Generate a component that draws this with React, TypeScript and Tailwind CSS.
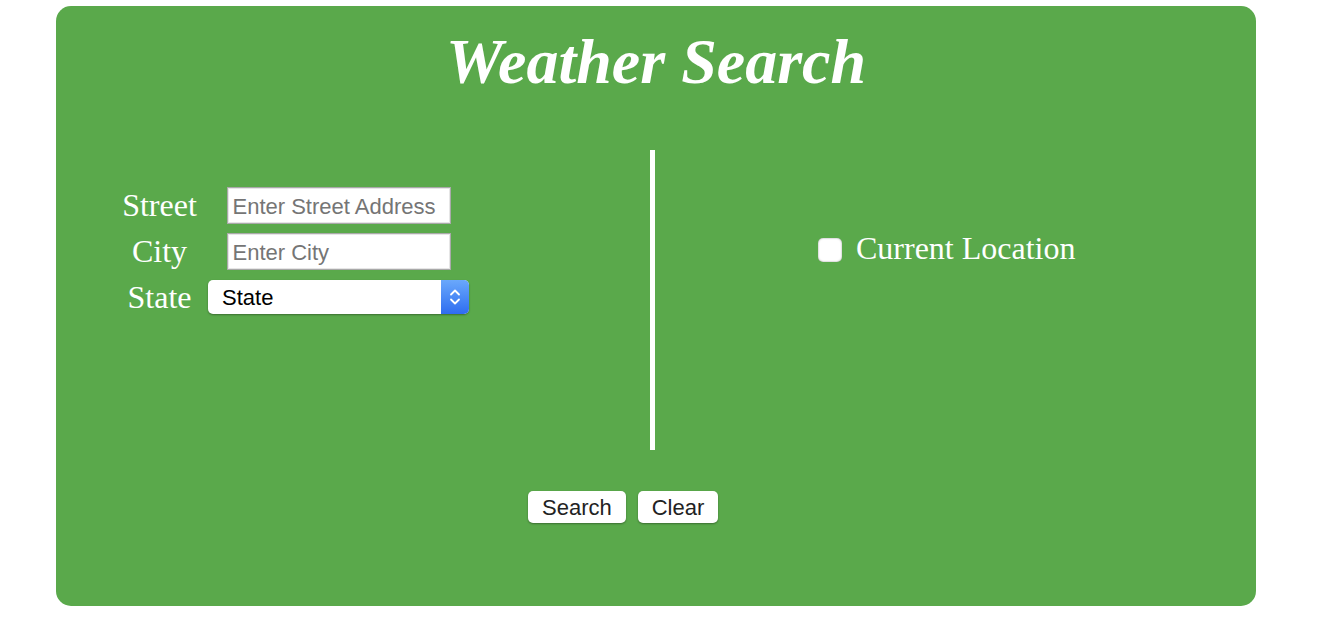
import { useState } from "react";

const serif = { fontFamily: '"Liberation Serif", "Times New Roman", serif' };
const sans = { fontFamily: '"Liberation Sans", Arial, sans-serif' };

export default function App() {
  const [street, setStreet] = useState("");
  const [city, setCity] = useState("");
  const [current, setCurrent] = useState(false);

  return (
    <div className="min-h-screen bg-white pt-[6px] pl-[56px]">
      <div className="w-[1200px] h-[600px] rounded-[15px] bg-[#5aa94b] text-white flex flex-col">
        {/* titulo */}
        <h1
          className="pt-[24px] text-center text-[64px] leading-[64px] font-bold italic"
          style={serif}
        >
          Weather Search
        </h1>

        <div className="mt-[56px] flex h-[300px]">
          {/* formulario */}
          <div className="w-[594px] pl-[55px] pt-[32px]">
            <div className="grid grid-cols-[97px_261px] auto-rows-[46px] items-center">
              <label className="text-center text-[32px]" style={serif}>
                Street
              </label>
              <div className="flex justify-center">
                <input
                  value={street}
                  onChange={(e) => setStreet(e.target.value)}
                  placeholder="Enter Street Address"
                  className="w-[224px] h-[37px] bg-white border border-[#a9a9a9] shadow-[inset_0_0_0_1px_#e6e6e6] px-[5px] pt-[3px] text-[22px] text-black placeholder:text-[#757575] outline-none"
                  style={sans}
                />
              </div>

              <label className="text-center text-[32px]" style={serif}>
                City
              </label>
              <div className="flex justify-center">
                <input
                  value={city}
                  onChange={(e) => setCity(e.target.value)}
                  placeholder="Enter City"
                  className="w-[224px] h-[37px] bg-white border border-[#a9a9a9] shadow-[inset_0_0_0_1px_#e6e6e6] px-[5px] pt-[3px] text-[22px] text-black placeholder:text-[#757575] outline-none"
                  style={sans}
                />
              </div>

              <label className="text-center text-[32px]" style={serif}>
                State
              </label>
              <div className="flex h-[34px] w-[261px] rounded-[5px] bg-white shadow-[0_1px_2px_rgba(0,0,0,0.35)] overflow-hidden">
                <select
                  className="flex-1 appearance-none bg-transparent pl-[14px] text-[22px] text-black outline-none"
                  style={sans}
                  defaultValue="State"
                >
                  <option>State</option>
                  <option>California</option>
                  <option>New York</option>
                  <option>Texas</option>
                </select>
                <div className="w-[28px] flex items-center justify-center bg-gradient-to-b from-[#6aa8fb] to-[#2f6cf0]">
                  <svg width="12" height="20" viewBox="0 0 12 20" fill="none">
                    <path d="M2 7.5 L6 3.5 L10 7.5" stroke="white" strokeWidth="1.8" strokeLinecap="round" strokeLinejoin="round" />
                    <path d="M2 12.5 L6 16.5 L10 12.5" stroke="white" strokeWidth="1.8" strokeLinecap="round" strokeLinejoin="round" />
                  </svg>
                </div>
              </div>
            </div>
          </div>

          {/* divisor */}
          <div className="w-[5px] h-[300px] bg-white" />

          {/* localizacao atual */}
          <div className="flex-1 pl-[163px] pt-[82px]">
            <label className="flex items-center gap-[14px] cursor-pointer">
              <span
                onClick={() => setCurrent(!current)}
                className="w-[24px] h-[24px] rounded-[5px] bg-white shadow-[inset_0_0_2px_rgba(0,0,0,0.45)] flex items-center justify-center text-[#2f6cf0] text-[18px]"
              >
                {current ? "✓" : ""}
              </span>
              <span className="text-[32px] leading-[36px] -translate-y-[2px]" style={serif}>
                Current Location
              </span>
            </label>
          </div>
        </div>

        {/* botoes */}
        <div className="mt-[41px] pl-[472px] flex gap-[12px]">
          <button
            className="h-[32px] px-[14px] rounded-[5px] bg-white text-[#222] text-[22px] shadow-[0_1px_2px_rgba(0,0,0,0.35)]"
            style={sans}
          >
            Search
          </button>
          <button
            onClick={() => {
              setStreet("");
              setCity("");
              setCurrent(false);
            }}
            className="h-[32px] px-[14px] rounded-[5px] bg-white text-[#222] text-[22px] shadow-[0_1px_2px_rgba(0,0,0,0.35)]"
            style={sans}
          >
            Clear
          </button>
        </div>
      </div>
    </div>
  );
}
